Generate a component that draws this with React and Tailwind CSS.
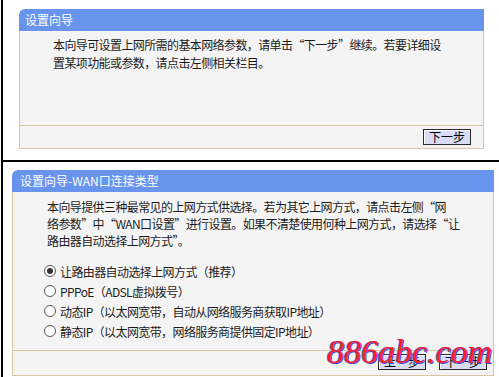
const font = { fontFamily: '"Noto Sans CJK SC", "Liberation Sans", sans-serif' };

const Btn = ({ children }) => (
  <button className="w-[48px] h-[16px] border border-[#2a2a2a] bg-[#d9dcf7] text-[12px] leading-none text-black flex items-center justify-center shadow-[inset_1px_1px_0_#ffffff]">
    {children}
  </button>
);

const Radio = ({ checked, children }) => (
  <div className="flex items-center h-[20px]">
    <span className="w-[12px] h-[12px] rounded-full border border-[#555] bg-white flex items-center justify-center mr-[4px]">
      {checked && <span className="w-[6px] h-[6px] rounded-full bg-[#333]" />}
    </span>
    <span>{children}</span>
  </div>
);

export default function App() {
  return (
    <div className="w-[499px] h-[377px] bg-white relative overflow-hidden" style={font}>
      <div className="ml-[1px] border-l-2 border-black h-full flex flex-col">
        {/* top wizard */}
        <div className="h-[160px] pt-[9px] pl-[16px]">
          <div className="w-[465px] flex flex-col">
            <div className="h-[22px] bg-[#6894ee] rounded-tl-[6px] text-white text-[12px] flex items-center pl-[6px]">
              设置向导
            </div>
            <div className="h-[94px] bg-[#f4f4f4] border-x border-[#d6c6a4] pt-[5px] pl-[33px] text-[12px] leading-[18px] text-[#1c1c1c] tracking-[-0.6px]">
              本向导可设置上网所需的基本网络参数，请单击“下一步”继续。若要详细设<br />
              置某项功能或参数，请点击左侧相关栏目。
            </div>
            <div className="h-[24px] bg-[#f4f4f4] border border-[#d6c6a4] flex justify-end pt-[3px] pr-[12px]">
              <Btn>下一步</Btn>
            </div>
          </div>
        </div>
        <div className="h-[2px] bg-black -ml-[2px]" />
        {/* WAN type */}
        <div className="pt-[8px] pl-[9px]">
          <div className="w-[482px] flex flex-col">
            <div className="h-[22px] bg-[#6894ee] rounded-tl-[6px] text-white text-[12px] flex items-center pl-[8px]">
              设置向导-WAN口连接类型
            </div>
            <div className="h-[158px] bg-[#f4f4f4] border-x border-[#d6c6a4] pt-[6px] pl-[34px] text-[12px] leading-[17px] text-[#1c1c1c] tracking-[-0.6px]">
              <div>
                本向导提供三种最常见的上网方式供选择。若为其它上网方式，请点击左侧“网<br />
                络参数”中“WAN口设置”进行设置。如果不清楚使用何种上网方式，请选择“让<br />
                路由器自动选择上网方式”。
              </div>
              <div className="mt-[12px] -ml-[3px]">
                <Radio checked>让路由器自动选择上网方式（推荐）</Radio>
                <Radio>PPPoE（ADSL虚拟拨号）</Radio>
                <Radio>动态IP（以太网宽带，自动从网络服务商获取IP地址）</Radio>
                <Radio>静态IP（以太网宽带，网络服务商提供固定IP地址）</Radio>
              </div>
            </div>
            <div className="h-[26px] bg-[#f4f4f4] border border-[#d6c6a4] flex justify-end gap-[13px] pt-[3px] pr-[6px]">
              <Btn>上一步</Btn>
              <Btn>下一步</Btn>
            </div>
          </div>
        </div>
      </div>
      <div
        className="absolute left-[327px] top-[335px] italic text-[34px] leading-none text-[#ff2020] whitespace-nowrap [text-shadow:1px_1px_0_#3b4fe0,-1px_0_0_#6a7bff]"
        style={{ fontFamily: '"Liberation Serif", serif' }}
      >
        886abc.com
      </div>
    </div>
  );
}
